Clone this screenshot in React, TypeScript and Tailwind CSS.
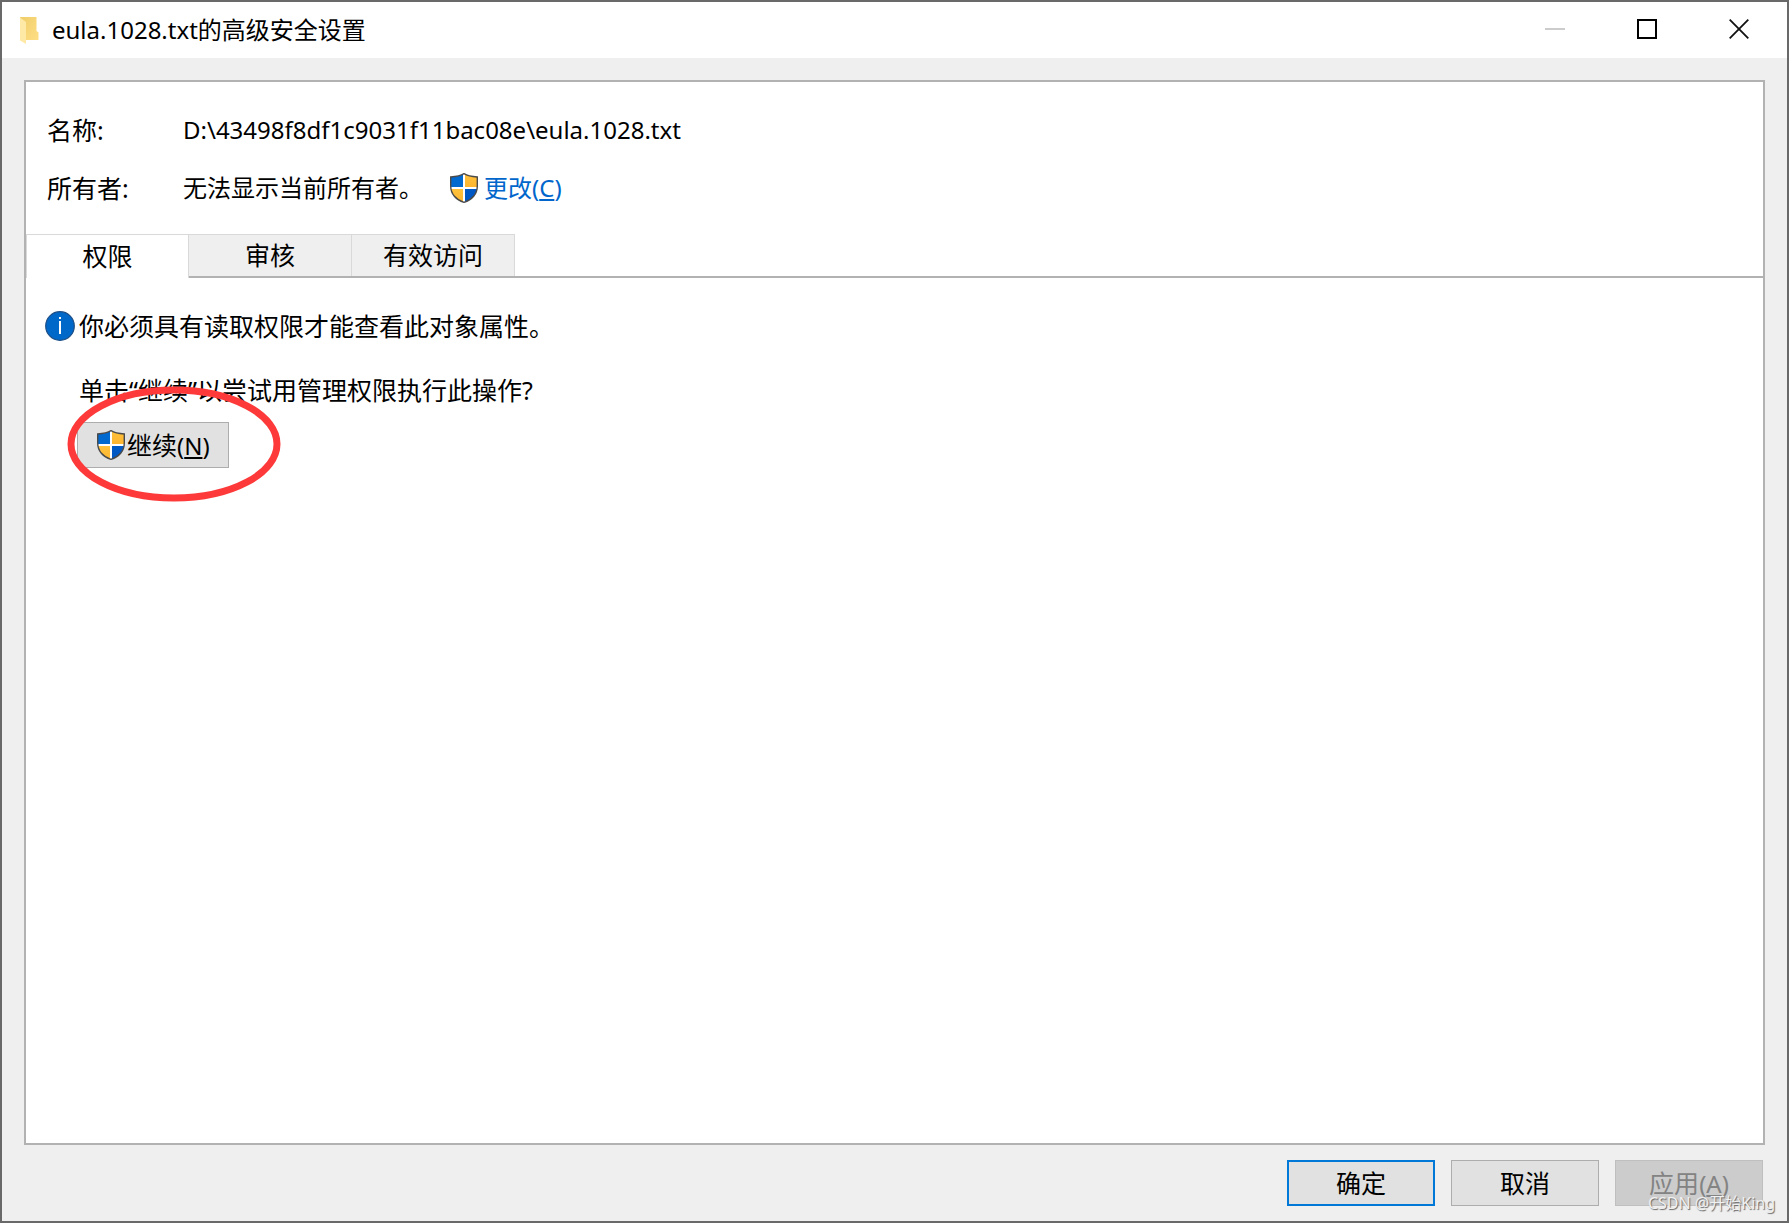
import React from 'react';

function Shield() {
  return (
    <svg width="28" height="30" viewBox="0 0 28 30" aria-hidden="true" className="shrink-0">
      <defs>
        <clipPath id="shield-clip">
          <path d="M14 0.7C11 2.600 6 3.700 0.7 4V13C0.7 21 6 27 14 29.3C22 27 27.3 21 27.3 13V4C22 3.700 17 2.600 14 0.7Z" />
        </clipPath>
        <linearGradient id="shield-gold" x1="0" y1="0" x2="0" y2="1">
          <stop offset="0" stopColor="#ffc23c" />
          <stop offset="1" stopColor="#ffb52f" />
        </linearGradient>
      </defs>
      <g clipPath="url(#shield-clip)">
        <rect width="28" height="30" fill="#fff" />
        <rect width="13" height="14" fill="#0069d0" />
        <rect x="15" width="13" height="14" fill="url(#shield-gold)" />
        <rect y="16" width="13" height="14" fill="url(#shield-gold)" />
        <rect x="15" y="16" width="13" height="14" fill="#0058c4" />
      </g>
      <path
        d="M14 0.7C11 2.600 6 3.700 0.7 4V13C0.7 21 6 27 14 29.3C22 27 27.3 21 27.3 13V4C22 3.700 17 2.600 14 0.7Z"
        fill="none"
        stroke="#4a4a4a"
        strokeWidth="1.4"
      />
    </svg>
  );
}

function FolderIcon() {
  return (
    <svg width="19" height="27" viewBox="0 0 19 27" aria-hidden="true" className="shrink-0">
      <defs>
        <linearGradient id="folder-back" x1="0" y1="0" x2="1" y2="1">
          <stop offset="0" stopColor="#efcd6a" />
          <stop offset="1" stopColor="#ffdf85" />
        </linearGradient>
      </defs>
      <path d="M0 0H16.500V14L18.500 15.500V23H5Z" fill="url(#folder-back)" />
      <path d="M0 0.500L6 5V27L0 23.500Z" fill="#ffe9a6" />
    </svg>
  );
}

function InfoIcon() {
  return (
    <svg width="30" height="30" viewBox="0 0 30 30" aria-hidden="true" className="shrink-0">
      <circle cx="15" cy="15" r="14.300" fill="#0068c9" stroke="#1d4e86" strokeWidth="1.200" />
      <rect x="14" y="10" width="2" height="13" fill="#fff" />
      <rect x="14" y="6" width="2" height="2" fill="#fff" />
    </svg>
  );
}

const tab = 'w-[163px] border-t border-r border-[#d9d9d9] text-[25px] leading-none';
const dialogButton = 'h-[46px] w-[148px] text-[25px] leading-none';
const captionButton = 'flex h-14 w-[92px] items-center justify-center pb-0.5';

function AccessKey({ letter }: { letter: string }) {
  return (
    <span className="text-[24px]">
      (<u className="underline-offset-2">{letter}</u>)
    </span>
  );
}

export default function App() {
  return (
    <div
      className={
        'flex min-h-screen flex-col border-2 border-[#696969] bg-[#efefef] text-[24px] leading-8 text-black ' +
        "font-['Noto_Sans','Noto_Sans_CJK_SC',sans-serif]"
      }
    >
      <header className="flex h-14 items-center bg-white pr-0.5 pl-[18px]">
        <FolderIcon />
        <h1 className="ml-[13px] grow">eula.1028.txt的高级安全设置</h1>
        <button type="button" disabled aria-label="最小化" className={captionButton}>
          <svg width="20" height="20" aria-hidden="true">
            <path d="M0 10H20" stroke="#cccccc" strokeWidth="2" />
          </svg>
        </button>
        <button type="button" aria-label="最大化" className={captionButton}>
          <svg width="20" height="20" aria-hidden="true">
            <rect x="1" y="1" width="18" height="18" fill="none" stroke="#000" strokeWidth="2" />
          </svg>
        </button>
        <button type="button" aria-label="关闭" className={captionButton}>
          <svg width="20" height="20" aria-hidden="true">
            <path d="M0.700 0.700L19.300 19.300M19.300 0.700L0.700 19.300" stroke="#111" strokeWidth="1.800" />
          </svg>
        </button>
      </header>

      <main className="mx-[22px] mt-[22px] flex grow flex-col border-2 border-[#b2b2b2] bg-white">
        <dl className="grid grid-cols-[136px_1fr] gap-y-[26px] pt-8 pb-[30px] pl-[21px]">
          <dt className="text-[25px]">名称:</dt>
          <dd>D:\43498f8df1c9031f11bac08e\eula.1028.txt</dd>
          <dt className="text-[25px]">所有者:</dt>
          <dd className="flex items-center">
            <span className="w-[267px]">无法显示当前所有者。</span>
            <a href="#change" className="flex items-center gap-1.5 text-[#0066cc]">
              <Shield />
              <span>更改<AccessKey letter="C" /></span>
            </a>
          </dd>
        </dl>

        <div role="tablist" className="flex">
          <button type="button" role="tab" aria-selected="true" className={tab + ' h-11 border-l bg-white'}>
            权限
          </button>
          <div className="flex grow border-b-2 border-[#b2b2b2]">
            <button type="button" role="tab" aria-selected="false" className={tab + ' h-[42px] bg-[#efefef]'}>
              审核
            </button>
            <button type="button" role="tab" aria-selected="false" className={tab + ' h-[42px] bg-[#efefef]'}>
              有效访问
            </button>
          </div>
        </div>

        <section role="tabpanel" className="pt-8 pl-[19px] text-[25px]">
          <p className="flex items-center gap-1">
            <InfoIcon />
            <span>你必须具有读取权限才能查看此对象属性。</span>
          </p>
          <p className="mt-8 pl-[34px]">单击“继续”以尝试用管理权限执行此操作?</p>
          <div className="relative mt-4 ml-8 w-fit">
            <button
              type="button"
              className="flex h-[46px] w-[152px] items-center gap-0.5 border border-[#adadad] bg-[#e1e1e1] pl-[19px]"
            >
              <Shield />
              <span>继续<AccessKey letter="N" /></span>
            </button>
            <svg
              width="214"
              height="116"
              viewBox="0 0 214 116"
              aria-hidden="true"
              className="pointer-events-none absolute -top-9 -left-2.5 max-w-none"
            >
              <ellipse cx="107" cy="58" rx="103" ry="54" fill="none" stroke="#fd3a39" strokeWidth="7" />
            </svg>
          </div>
        </section>
      </main>

      <footer className="relative flex justify-end gap-4 px-6 py-[15px]">
        <button type="button" className={dialogButton + ' border-2 border-[#0078d7] bg-[#e1e1e1]'}>确定</button>
        <button type="button" className={dialogButton + ' border border-[#adadad] bg-[#e1e1e1]'}>取消</button>
        <button type="button" disabled className={dialogButton + ' border border-[#bfbfbf] bg-[#cccccc] text-[#838383]'}>
          应用<AccessKey letter="A" />
        </button>
        <span className="pointer-events-none absolute right-3 bottom-1.5 text-[16px] leading-6 text-[#f0f0f0] [text-shadow:1px_1px_1px_#666]">
          CSDN @开始King
        </span>
      </footer>
    </div>
  );
}
